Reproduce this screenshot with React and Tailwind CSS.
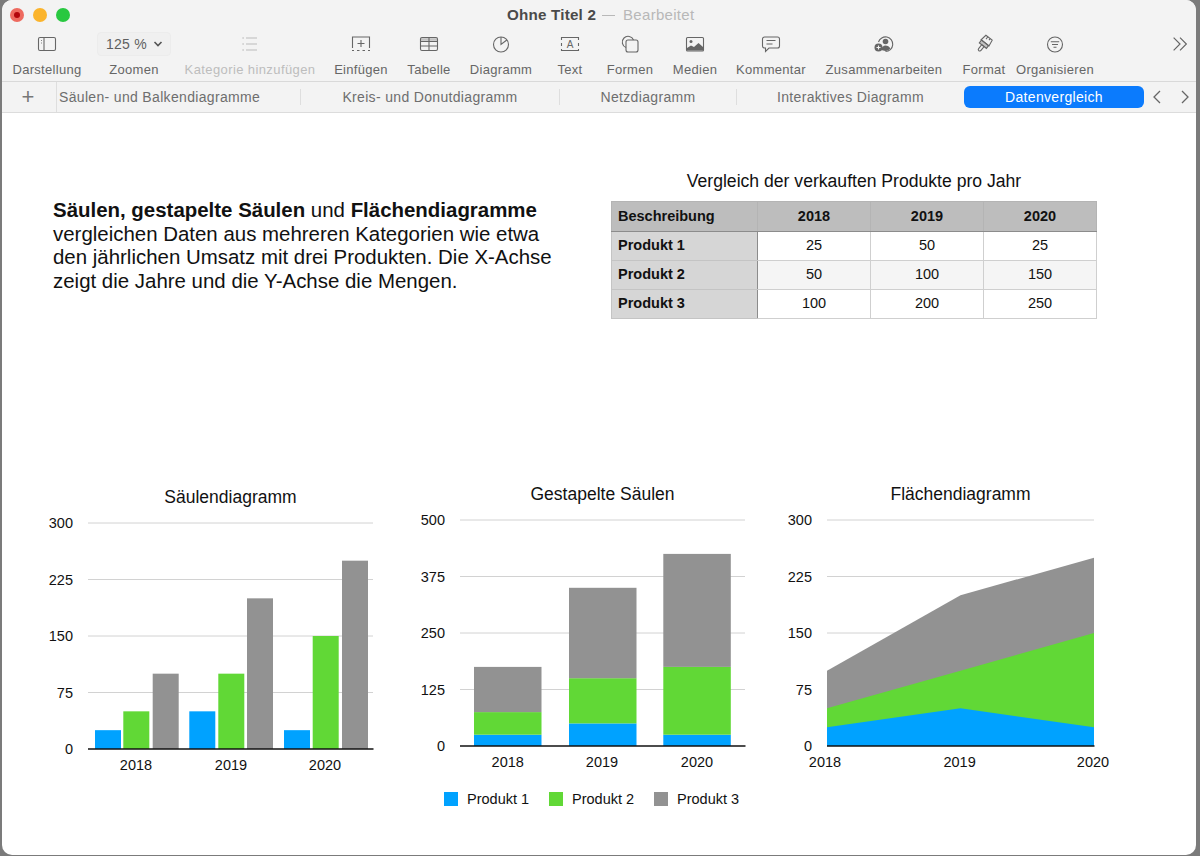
import React from "react";

const BLUE = "#00a2ff";
const GREEN = "#61d836";
const GRAY = "#929292";

const Icon = ({ children, className = "text-[#666666]" }) => (
  <svg width="22" height="22" viewBox="0 0 22 22" fill="none" stroke="currentColor" strokeWidth="1.1" className={className}>
    {children}
  </svg>
);

const SidebarIcon = () => (
  <Icon>
    <rect x="2.5" y="4.5" width="17" height="13" rx="1.5" />
    <path d="M8 4.5v13" />
    <path d="M5 7.5h.8M5 10h.8" />
  </Icon>
);

const ListIcon = () => (
  <Icon className="text-[#bcbcbc]">
    <path d="M7 5h11M7 11h11M7 17h11" />
    <path d="M3.5 5h1.2M3.5 11h1.2M3.5 17h1.2" strokeWidth="1.6" />
  </Icon>
);

const InsertIcon = () => (
  <Icon>
    <path d="M2.5 15V4h17v11" />
    <path d="M2 17.5h2M7 17.5h2.5M12.5 17.5H15M18 17.5h2" />
    <path d="M11 7v7M7.5 10.5h7" />
  </Icon>
);

const TableIcon = () => (
  <Icon>
    <rect x="2.5" y="4.5" width="17" height="13" rx="1.5" />
    <path d="M2.5 8.5h17M2.5 13h17M11 4.5v13" />
    <path d="M3 6.5h16" strokeWidth="2.6" opacity="0.35" />
  </Icon>
);

const PieIcon = () => (
  <Icon>
    <circle cx="11" cy="11.5" r="7.5" />
    <path d="M11 4v7.5l5.800-4.500" />
  </Icon>
);

const TextIcon = () => (
  <Icon>
    <path d="M2.5 7V4.5h17V7M2.5 10v3M19.5 10v3M2.5 16v1.5h17V16" />
    <text x="11" y="15" textAnchor="middle" fontSize="10" fill="currentColor" stroke="none">A</text>
  </Icon>
);

const ShapesIcon = () => (
  <Icon>
    <path d="M7 14.5a5.8 5.8 0 1 1 7.5-7.5" />
    <rect x="7" y="7" width="12" height="12" rx="2" />
  </Icon>
);

const MediaIcon = () => (
  <Icon>
    <rect x="2.5" y="4.5" width="17" height="13.5" rx="1" />
    <circle cx="7" cy="8.5" r="1.5" fill="currentColor" stroke="none" />
    <path d="M3 17.5v-2.5l4-2.5 3 1.5 4.5-4 4.5 4v3.5z" fill="currentColor" stroke="none" />
  </Icon>
);

const CommentIcon = () => (
  <Icon>
    <path d="M4.5 4h13A2 2 0 0 1 19.5 6v7a2 2 0 0 1-2 2H9l-3.5 3.5V15h-1a2 2 0 0 1-2-2V6a2 2 0 0 1 2-2z" />
    <path d="M6.5 7.5h9M6.5 11h6" />
  </Icon>
);

const CollabIcon = () => (
  <Icon>
    <path d="M5.5 9a7.3 7.3 0 1 1 7 9.5" />
    <circle cx="12.5" cy="8.5" r="2.8" fill="currentColor" stroke="none" />
    <path d="M8 17c.5-3 2.500-4.500 4.500-4.500s4 1 4.800 3c-1.300 1.500-3 2.400-4.800 2.400z" fill="currentColor" stroke="none" />
    <circle cx="5.500" cy="14.500" r="4" fill="currentColor" stroke="none" />
    <path d="M5.500 12.500v4M3.500 14.500h4" stroke="#f3f3f3" />
  </Icon>
);

const BrushIcon = () => (
  <Icon>
    <g transform="translate(-0.5 0.8) rotate(38 11 11)">
      <path d="M7 2h8l1 6.500H6z" />
      <path d="M9.500 2v3M12.500 2v2" />
      <rect x="6.500" y="8.500" width="9" height="3.500" fill="currentColor" fillOpacity="0.35" />
      <path d="M9.500 12h3v5a1.500 1.500 0 0 1-3 0z" />
    </g>
  </Icon>
);

const OrganizeIcon = () => (
  <Icon>
    <circle cx="11" cy="11.500" r="7.500" />
    <path d="M6.800 8.800h8.400M8 11.500h6M9.500 14.200h3" />
  </Icon>
);

const toolbarItems = [
  { label: "Darstellung", w: "w-[80px]", icon: <SidebarIcon /> },
  { label: "Zoomen", w: "w-[94px]", zoom: true },
  { label: "Kategorie hinzufügen", w: "w-[138px]", icon: <ListIcon />, muted: true },
  { label: "Einfügen", w: "w-[84px]", icon: <InsertIcon /> },
  { label: "Tabelle", w: "w-[52px]", icon: <TableIcon /> },
  { label: "Diagramm", w: "w-[92px]", icon: <PieIcon /> },
  { label: "Text", w: "w-[46px]", icon: <TextIcon /> },
  { label: "Formen", w: "w-[74px]", icon: <ShapesIcon /> },
  { label: "Medien", w: "w-[56px]", icon: <MediaIcon /> },
  { label: "Kommentar", w: "w-[96px]", icon: <CommentIcon /> },
  { label: "Zusammenarbeiten", w: "w-[130px]", icon: <CollabIcon /> },
  { label: "Format", w: "w-[70px]", icon: <BrushIcon /> },
  { label: "Organisieren", w: "w-[72px]", icon: <OrganizeIcon /> },
];

const ZoomPill = () => (
  <div className="-my-[1px] flex h-[24px] w-[74px] items-center justify-between rounded-[4px] border border-[#ececec] bg-[#f0f0f0] pl-[8px] pr-[7px] text-[14px] tracking-[0.25px] text-[#5f5f5f]">
    125 %
    <svg width="10" height="8" viewBox="0 0 10 8" fill="none" stroke="#555555" strokeWidth="1.6">
      <path d="M1.500 2l3.500 3.500L8.500 2" />
    </svg>
  </div>
);

const Toolbar = () => (
  <div className="flex h-[52px] items-start border-b border-[#d9d9d9] pl-[5px]">
    {toolbarItems.map((item) => (
      <div key={item.label} className={`${item.w} flex shrink-0 flex-col items-center pt-[3px]`}>
        <div className="flex h-[22px] items-center">{item.zoom ? <ZoomPill /> : item.icon}</div>
        <span className={`mt-[7px] whitespace-nowrap text-[13px] leading-[16px] ${item.muted ? "tracking-[0.4px] text-[#bdbdbd]" : "tracking-[0.3px] text-[#666666]"}`}>
          {item.label}
        </span>
      </div>
    ))}
    <svg width="20" height="20" viewBox="0 0 22 22" fill="none" stroke="#666666" strokeWidth="1.300" className="ml-[79px] mt-[4px] shrink-0">
      <path d="M4 4l7 7-7 7M11 4l7 7-7 7" />
    </svg>
  </div>
);

const Tabs = () => (
  <div className="flex h-[31px] items-center border-b border-[#dcdcdc] text-[14px] tracking-[0.33px] text-[#6e6e6e]">
    <div className="flex h-full w-[55px] items-center justify-center border-r border-[#dedede] pr-[2px] text-[22px] font-light leading-none text-[#777777]">+</div>
    <div className="w-[243px] pl-[2px]">Säulen- und Balkendiagramme</div>
    <div className="h-[16px] border-l border-[#dedede]" />
    <div className="w-[258px] text-center">Kreis- und Donutdiagramm</div>
    <div className="h-[16px] border-l border-[#dedede]" />
    <div className="w-[176px] text-center">Netzdiagramm</div>
    <div className="h-[16px] border-l border-[#dedede]" />
    <div className="w-[227px] text-center">Interaktives Diagramm</div>
    <div className="flex h-[22px] w-[180px] items-center justify-center rounded-[6px] bg-[#0b7bfd] text-white">Datenvergleich</div>
    <svg width="14" height="16" viewBox="0 0 14 16" fill="none" stroke="#666666" strokeWidth="1.300" className="ml-[6px]">
      <path d="M10 2L4 8l6 6" />
    </svg>
    <svg width="14" height="16" viewBox="0 0 14 16" fill="none" stroke="#666666" strokeWidth="1.300" className="ml-[14px]">
      <path d="M4 2l6 6-6 6" />
    </svg>
  </div>
);

const tableRows = [
  { name: "Produkt 1", values: [25, 50, 25], bg: "bg-white" },
  { name: "Produkt 2", values: [50, 100, 150], bg: "bg-[#f5f5f5]" },
  { name: "Produkt 3", values: [100, 200, 250], bg: "bg-white" },
];

const DataTable = () => (
  <table className="w-[485px] table-fixed border-collapse text-[14.5px] text-[#111111]">
    <colgroup>
      <col className="w-[146px]" />
      <col className="w-[113px]" />
      <col className="w-[113px]" />
      <col className="w-[113px]" />
    </colgroup>
    <thead>
      <tr className="h-[30px] bg-[#bdbdbd] font-bold">
        <th className="border border-[#b4b4b4] border-b-[#8c8c8c] pl-[6px] text-left">Beschreibung</th>
        <th className="border border-[#b4b4b4] border-b-[#8c8c8c]">2018</th>
        <th className="border border-[#b4b4b4] border-b-[#8c8c8c]">2019</th>
        <th className="border border-[#b4b4b4] border-b-[#8c8c8c]">2020</th>
      </tr>
    </thead>
    <tbody>
      {tableRows.map((row) => (
        <tr key={row.name} className={`h-[29px] ${row.bg}`}>
          <td className="border border-[#c4c4c4] border-r-[#8c8c8c] bg-[#d6d6d6] pl-[6px] font-bold">{row.name}</td>
          {row.values.map((v, i) => (
            <td key={i} className="border border-[#cfcfcf] text-center">{v}</td>
          ))}
        </tr>
      ))}
    </tbody>
  </table>
);

const PLOT_TOP = 11;
const PLOT_H = 226;
const PLOT_LEFT = 40;

const Chart = ({ title, w, plotW, max, labels, years, children, className = "" }) => {
  const y = (v) => PLOT_TOP + PLOT_H - (v * PLOT_H) / max;
  return (
    <div className={`shrink-0 ${className}`} style={{ width: w }}>
      <div className="ml-[40px] text-center text-[17.5px] leading-[22px] text-[#111111]" style={{ width: plotW }}>
        {title}
      </div>
      <svg width={w} height="270" className="mt-[4px] overflow-visible">
        {labels.map((l, i) => (
          <g key={l}>
            {i < labels.length - 1 && (
              <line x1={PLOT_LEFT} x2={PLOT_LEFT + plotW} y1={PLOT_TOP + (PLOT_H / 4) * i} y2={PLOT_TOP + (PLOT_H / 4) * i} stroke="#d2d2d2" />
            )}
            <text x={PLOT_LEFT - 15} y={PLOT_TOP + (PLOT_H / 4) * i + 5} textAnchor="end" fill="#111111" className="text-[14.5px]">
              {l}
            </text>
          </g>
        ))}
        {children(y)}
        <line x1={PLOT_LEFT} x2={PLOT_LEFT + plotW + 0.5} y1={PLOT_TOP + PLOT_H} y2={PLOT_TOP + PLOT_H} stroke="#111111" strokeWidth="1.500" />
        {years.map((yr) => (
          <text key={yr.t} x={yr.x} y={PLOT_TOP + PLOT_H + 21} textAnchor="middle" fill="#111111" className="text-[14.5px]">
            {yr.t}
          </text>
        ))}
      </svg>
    </div>
  );
};

const clusterBars = [
  { x: [47, 75.300, 104.700], v: [25, 50, 100] },
  { x: [141.300, 170.300, 199], v: [50, 100, 200] },
  { x: [236, 264.700, 294], v: [25, 150, 250] },
];

const stackBars = [
  { x: 54, v: [25, 50, 100] },
  { x: 149, v: [50, 100, 200] },
  { x: 243.300, v: [25, 150, 250] },
];

const colors = [BLUE, GREEN, GRAY];

const areaPoints = (y, vals) => {
  const xs = [40, 173.500, 307];
  const top = vals.map((v, i) => `${xs[i]},${y(v)}`).join(" ");
  return `40,${y(0)} ${top} 307,${y(0)}`;
};

const Legend = () => (
  <div className="ml-[24px] mt-[13px] flex text-[14.5px] leading-[14px] text-[#111111]">
    {["Produkt 1", "Produkt 2", "Produkt 3"].map((name, i) => (
      <div key={name} className="flex w-[105px] shrink-0 items-center">
        <span className={`mr-[9px] h-[14px] w-[14px] ${i === 0 ? "bg-[#00a2ff]" : i === 1 ? "bg-[#61d836]" : "bg-[#929292]"}`} />
        {name}
      </div>
    ))}
  </div>
);

export default function App() {
  return (
    <div className="h-[856px] w-[1200px] overflow-hidden bg-[#7b7b7b] pb-[1px] pl-[2px] pr-[4px] font-['Liberation_Sans',Arial,sans-serif]">
      <div className="flex h-full flex-col overflow-hidden rounded-[10px] bg-white">
        <div className="bg-[#f3f3f3]">
          <div className="flex h-[30px] items-center pl-[8px]">
            <div className="flex gap-[9px]">
              <span className="flex h-[14px] w-[14px] items-center justify-center rounded-full bg-[#ee6a5f]">
                <span className="h-[6px] w-[6px] rounded-full bg-[#b3060c]" />
              </span>
              <span className="h-[14px] w-[14px] rounded-full bg-[#fbb42c]" />
              <span className="h-[14px] w-[14px] rounded-full bg-[#28c840]" />
            </div>
            <div className="ml-[437px] mt-[1px] flex items-center whitespace-nowrap text-[15.2px] tracking-[0.2px]">
              <span className="font-bold text-[#4a4a4a]">Ohne Titel 2</span>
              <span className="ml-[6px] w-[13px] border-t-[1.5px] border-[#b8b8b8]" />
              <span className="ml-[8px] text-[15px] tracking-[0.3px] text-[#b8b8b8]">Bearbeitet</span>
            </div>
          </div>
          <Toolbar />
          <Tabs />
        </div>

        <div className="flex items-start">
          <p className="ml-[51px] mt-[85px] w-[558px] text-[20.45px] leading-[23.7px] text-[#111111]">
            <b>Säulen, gestapelte Säulen</b> und <b>Flächendiagramme</b>
            <br />
            vergleichen Daten aus mehreren Kategorien wie etwa
            <br />
            den jährlichen Umsatz mit drei Produkten. Die X-Achse
            <br />
            zeigt die Jahre und die Y-Achse die Mengen.
          </p>
          <div className="mt-[57px]">
            <div className="mb-[9px] text-center text-[17.6px] leading-[22px] text-[#111111]">
              Vergleich der verkauften Produkte pro Jahr
            </div>
            <DataTable />
          </div>
        </div>

        <div className="ml-[46px] mt-[164px] flex items-start">
          <Chart
            title="Säulendiagramm"
            className="mt-[3px]"
            w={335}
            plotW={285}
            max={300}
            labels={[300, 225, 150, 75, 0]}
            years={[{ t: 2018, x: 88 }, { t: 2019, x: 183 }, { t: 2020, x: 277 }]}
          >
            {(y) =>
              clusterBars.map((group) =>
                group.x.map((x, i) => (
                  <rect key={x} x={x} y={y(group.v[i])} width="26" height={y(0) - y(group.v[i])} fill={colors[i]} />
                ))
              )
            }
          </Chart>

          <div className="ml-[37px] w-[335px] shrink-0">
            <Chart
              title="Gestapelte Säulen"
              w={335}
              plotW={285}
              max={500}
              labels={[500, 375, 250, 125, 0]}
              years={[{ t: 2018, x: 87.700 }, { t: 2019, x: 182 }, { t: 2020, x: 277 }]}
            >
              {(y) =>
                stackBars.map((bar) => {
                  let total = 0;
                  return bar.v.map((v, i) => {
                    const top = y(total + v);
                    const h = y(total) - top;
                    total += v;
                    return <rect key={i} x={bar.x} y={top} width="67.500" height={h} fill={colors[i]} />;
                  });
                })
              }
            </Chart>
            <Legend />
          </div>

          <Chart
            title="Flächendiagramm"
            className="ml-[32px]"
            w={327}
            plotW={267}
            max={300}
            labels={[300, 225, 150, 75, 0]}
            years={[{ t: 2018, x: 38 }, { t: 2019, x: 172.600 }, { t: 2020, x: 306 }]}
          >
            {(y) => (
              <>
                <polygon points={areaPoints(y, [100, 200, 250])} fill={GRAY} />
                <polygon points={areaPoints(y, [50, 100, 150])} fill={GREEN} />
                <polygon points={areaPoints(y, [25, 50, 25])} fill={BLUE} />
              </>
            )}
          </Chart>
        </div>
      </div>
    </div>
  );
}
